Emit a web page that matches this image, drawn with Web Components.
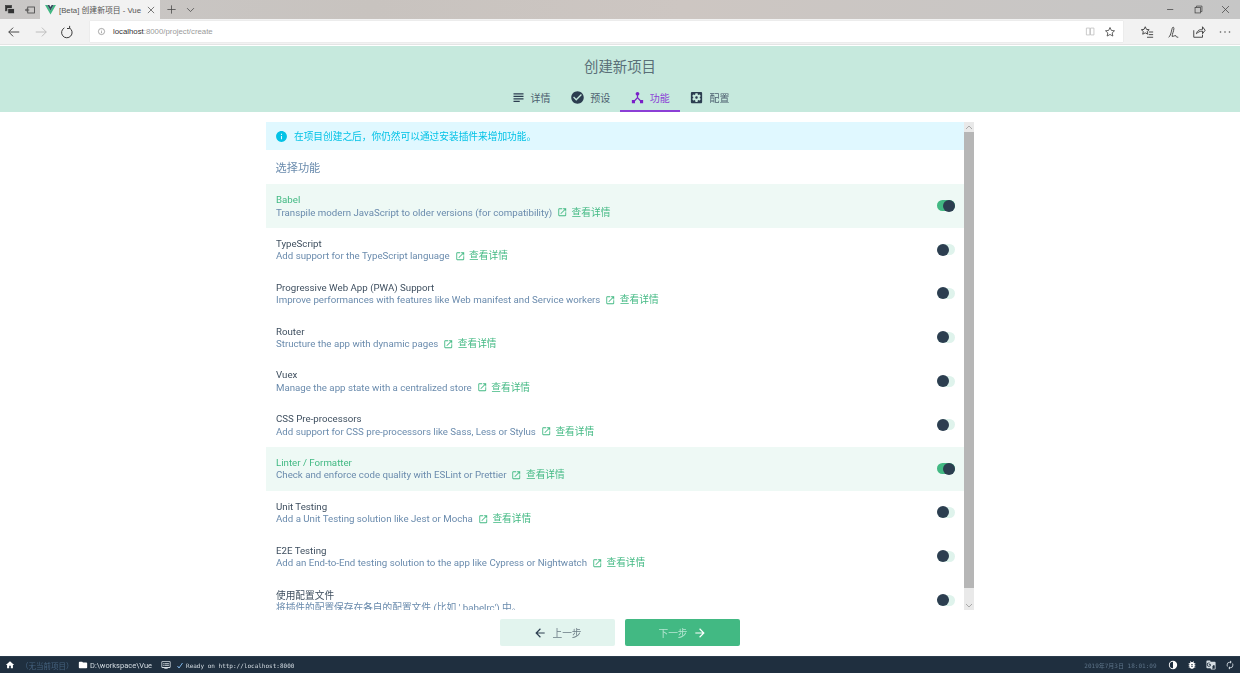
<!DOCTYPE html>
<html lang="zh-CN"><head><meta charset="utf-8"><title>[Beta] 创建新项目 - Vue</title>
<style>
html,body{margin:0;height:673px;overflow:hidden;background:#fff}
body{font:9.7px Roboto,"Noto Sans CJK SC",sans-serif;color:#2c3e50}
app-page{display:flex;flex-direction:column;width:1240px;height:673px;filter:blur(.3px)}
</style></head><body>
<app-page>
  <browser-chrome></browser-chrome>
  <project-header title-text="创建新项目"></project-header>
  <main-panel></main-panel>
  <wizard-actions></wizard-actions>
  <status-bar></status-bar>
</app-page>
<script>
const P={
 subject:'M14 17H4v2h10v-2zm6-8H4v2h16V9zM4 15h16v-2H4v2zM4 5v2h16V5H4z',
 check:'M12 2C6.48 2 2 6.48 2 12s4.48 10 10 10 10-4.48 10-10S17.52 2 12 2zm-2 15l-5-5 1.41-1.41L10 14.17l7.59-7.59L19 8l-9 9z',
 hub:'M17 16l-4-4V8.82C14.16 8.4 15 7.3 15 6c0-1.66-1.34-3-3-3S9 4.34 9 6c0 1.3.84 2.4 2 2.82V12l-4 4H3v5h5v-3.05l4-4.2 4 4.2V21h5v-5h-4z',
 settings:'M12 10c-1.1 0-2 .9-2 2s.9 2 2 2 2-.9 2-2-.9-2-2-2zm7-7H5c-1.11 0-2 .9-2 2v14c0 1.1.89 2 2 2h14c1.11 0 2-.9 2-2V5c0-1.1-.89-2-2-2zm-1.75 9c0 .23-.02.46-.05.68l1.48 1.16c.13.11.17.3.08.45l-1.4 2.42c-.09.15-.27.21-.43.15l-1.74-.7c-.36.28-.76.51-1.18.69l-.26 1.85c-.03.17-.18.3-.35.3h-2.8c-.17 0-.32-.13-.35-.29l-.26-1.85c-.43-.18-.82-.41-1.18-.69l-1.74.7c-.16.06-.34 0-.43-.15l-1.4-2.42c-.09-.15-.05-.34.08-.45l1.48-1.16c-.03-.23-.05-.46-.05-.69 0-.23.02-.46.05-.68l-1.48-1.16c-.13-.11-.17-.3-.08-.45l1.4-2.42c.09-.15.27-.21.43-.15l1.74.7c.36-.28.76-.51 1.18-.69l.26-1.85c.03-.17.18-.3.35-.3h2.8c.17 0 .32.13.35.29l.26 1.85c.43.18.82.41 1.18.69l1.74-.7c.16-.06.34 0 .43.15l1.4 2.42c.09.15.05.34-.08.45l-1.48 1.16c.03.23.05.46.05.69z',
 open:'M19 19H5V5h7V3H5c-1.11 0-2 .9-2 2v14c0 1.1.89 2 2 2h14c1.1 0 2-.9 2-2v-7h-2v7zM14 3v2h3.59l-9.83 9.83 1.41 1.41L19 6.41V10h2V3h-7z',
 back:'M20 11H7.83l5.59-5.59L12 4l-8 8 8 8 1.41-1.41L7.83 13H20v-2z',
 fwd:'M12 4l-1.41 1.41L16.17 11H4v2h12.17l-5.58 5.59L12 20l8-8z',
 info:'M12 2C6.48 2 2 6.48 2 12s4.48 10 10 10 10-4.48 10-10S17.52 2 12 2zm1 15h-2v-6h2v6zm0-8h-2V7h2v2z',
 home:'M10 20v-6h4v6h5v-8h3L12 3 2 12h3v8z',
 folder:'M10 4H4c-1.1 0-1.99.9-1.99 2L2 18c0 1.1.9 2 2 2h16c1.1 0 2-.9 2-2V8c0-1.1-.9-2-2-2h-8l-2-2z',
 dvr:'M21 3H3c-1.1 0-2 .9-2 2v12c0 1.1.9 2 2 2h5v2h8v-2h5c1.1 0 1.99-.9 1.99-2L23 5c0-1.1-.9-2-2-2zm0 14H3V5h18v12zm-2-9H8v2h11V8zm0 4H8v2h11v-2zM7 8H5v2h2V8zm0 4H5v2h2v-2z',
 half:'M12 2a10 10 0 1 0 0 20 10 10 0 0 0 0-20zm0 2.2v15.6a7.8 7.8 0 0 1 0-15.6z',
 bug:'M20 8h-2.81c-.45-.78-1.07-1.45-1.82-1.96L17 4.41 15.59 3l-2.17 2.17C12.96 5.06 12.49 5 12 5c-.49 0-.96.06-1.41.17L8.41 3 7 4.41l1.62 1.63C7.88 6.55 7.26 7.22 6.81 8H4v2h2.09c-.05.33-.09.66-.09 1v1H4v2h2v1c0 .34.04.67.09 1H4v2h2.81c1.04 1.79 2.97 3 5.19 3s4.15-1.21 5.19-3H20v-2h-2.09c.05-.33.09-.66.09-1v-1h2v-2h-2v-1c0-.34-.04-.67-.09-1H20V8zm-6 8h-4v-2h4v2zm0-4h-4v-2h4v2z',
 trans:'M21 4H11l-1-3H3c-1.1 0-2 .9-2 2v15c0 1.1.9 2 2 2h8l1 3h9c1.1 0 2-.9 2-2V6c0-1.1-.9-2-2-2zM7 16c-2.76 0-5-2.24-5-5s2.24-5 5-5c1.35 0 2.48.5 3.35 1.3L9 8.6c-.38-.36-1.04-.78-2-.78-1.71 0-3.1 1.41-3.1 3.18S5.29 14.18 7 14.18c1.98 0 2.72-1.42 2.84-2.18H7v-1.71h4.73c.04.26.08.52.08.85C11.81 14 9.9 16 7 16zm14 5h-7l2-2-1-3 3-4 3 1v8z',
 refresh:'M12 6v3l4-4-4-4v3c-4.42 0-8 3.58-8 8 0 1.57.46 3.03 1.24 4.26L6.7 14.8c-.45-.83-.7-1.79-.7-2.8 0-3.31 2.69-6 6-6zm6.76 1.74L17.3 9.2c.44.84.7 1.79.7 2.8 0 3.31-2.69 6-6 6v-3l-4 4 4 4v-3c4.42 0 8-3.58 8-8 0-1.57-.46-3.03-1.24-4.26z'
};
const ic=(n,s,c,x='')=>`<svg width="${s}" height="${s}" viewBox="0 0 24 24" style="fill:${c};flex:none;display:block;${x}"><path d="${P[n]}"/></svg>`;
function def(name,render){customElements.define(name,class extends HTMLElement{connectedCallback(){if(!this.shadowRoot)this.attachShadow({mode:'open'});this.shadowRoot.innerHTML=render(this)}})}
const st=(n,s=14)=>`<svg width="${s}" height="${s}" viewBox="0 0 16 16" fill="none" stroke="#444" stroke-width="1.1" style="display:block;flex:none">${n}</svg>`;

def('browser-chrome',()=>`<style>
:host{display:block;flex:none;height:46px;font-family:"Liberation Sans","Noto Sans CJK SC",sans-serif}
.strip{height:19px;display:flex;align-items:center;background:linear-gradient(90deg,#c9c7c6,#c8c3bf 30%,#cdc6c2 55%,#c6c6c6)}
.l{width:40px;display:flex;gap:8px;padding-left:4px;box-sizing:border-box}
.tab{width:120px;height:19px;background:#f2f2f2;display:flex;align-items:center;padding:0 4px 0 5px;box-sizing:border-box;font-size:7.800px;color:#555;white-space:nowrap}
.tab span{margin-left:3px;flex:1;overflow:hidden}
.after{display:flex;gap:8px;margin-left:6px;align-items:center}
.sp{flex:1}.win{display:flex;gap:16.500px;padding-right:9px;align-items:center}
.bar{height:26px;background:#f2f2f2;display:flex;align-items:center;border-bottom:1px solid #e4e4e4;box-sizing:border-box}
.nav{width:90px;display:flex;gap:12.500px;padding-left:7px;box-sizing:border-box}
.url{width:1033px;height:21px;background:#fff;box-shadow:0 0 1px #ccc;display:flex;align-items:center;padding:0 7px;box-sizing:border-box;font-size:7.800px;color:#9a9a9a}
.url b{font-weight:400;color:#333;margin-left:7px}
.end{margin-left:auto;display:flex;align-items:center;gap:8.500px}
.right{display:flex;gap:12px;padding-left:17px}
</style>
<div class="strip">
 <div class="l">${st('<rect x="2" y="2" width="8" height="7" fill="#333"/><rect x="5" y="6" width="9" height="7" fill="#333" stroke="#ccc"/>',12)}${st('<rect x="5" y="4" width="9" height="8"/><path d="M2 8h5M4 6l-2 2 2 2"/>',12)}</div>
 <div class="tab"><svg width="11" height="10" viewBox="0 0 24 22" style="display:block;flex:none"><path d="M0 0h5l7 12L19 0h5L12 21z" fill="#41b883"/><path d="M5 0h4.500l2.500 4.500L14.500 0H19l-7 12z" fill="#34495e"/></svg><span>[Beta] 创建新项目 - Vue</span>${st('<path d="M3 3l10 10M13 3L3 13"/>',10)}</div>
 <div class="after">${st('<path d="M8 2v12M2 8h12"/>',11)}${st('<path d="M3 6l5 5 5-5"/>',11)}</div>
 <div class="sp"></div>
 <div class="win">${st('<path d="M3 8h9"/>',11)}${st('<rect x="3" y="5" width="8" height="8"/><path d="M5 5V3h8v8h-2"/>',11)}${st('<path d="M3 3l10 10M13 3L3 13"/>',11)}</div>
</div>
<div class="bar">
 <div class="nav">${st('<path d="M14 8H2M7 3L2 8l5 5"/>')}${st('<path d="M2 8h12M9 3l5 5-5 5" stroke="#bbb"/>')}${st('<path d="M11 3.500A6 6 0 1 1 5 3.300M11 1v3h-3" stroke="#333" />')}</div>
 <div class="url">${st('<circle cx="8" cy="8" r="5.500" stroke="#777"/><path d="M8 7.500v3.500M8 5v1" stroke="#777"/>',9)}<b>localhost</b>:8000/project/create
  <div class="end">${st('<path d="M2 3h5v10H2zM8 3h5v10H8z" stroke="#bbb"/>',11)}${st('<path d="M8 2l1.800 3.900 4.200.500-3.100 2.800.900 4.200L8 11.300l-3.800 2.100.9-4.200L2 6.400l4.200-.500z"/>',12)}</div>
 </div>
 <div class="right">${st('<path d="M6 2l1.400 3 3.100.400-2.300 2 .700 3.100L6 9l-2.900 1.500.7-3.100-2.300-2 3.100-.400zM10 8h5M10 11h5M8 14h7"/>')}${st('<path d="M3 14c2-1 3-6 4-10 .5-2 2-2 2 0 0 3-2 6-2 9 2 0 3-1 4-1 0 1 1 2 3 2"/>')}${st('<path d="M2 6v8h10v-3M5 10c1-4 4-5 7-5V2l3 4-3 4V7c-3 0-5 1-7 3z"/>')}<svg width="12" height="14" viewBox="0 0 12 14" style="display:block;margin-left:1px"><g fill="#555"><circle cx="1.500" cy="7" r=".8"/><circle cx="6" cy="7" r=".8"/><circle cx="10.500" cy="7" r=".8"/></g></svg></div>
</div>`);

def('nav-tab',h=>{const a=h.hasAttribute('active');return `<style>
:host{display:flex;width:59.600px;height:24px;box-sizing:border-box;align-items:center;justify-content:center;gap:5px;padding-bottom:3px;font-size:10px;border-bottom:2px solid ${a?'#8c3fd6':'transparent'};color:${a?'#8c3fd6':'#4c5f6f'}}
</style>${ic(h.getAttribute('icon'),15,a?'#7a1fc8':'#2c3e50')}<slot></slot>`});

def('project-header',h=>`<style>
:host{display:block;flex:none;height:66px;background:#c6e9dd;box-sizing:border-box;text-align:center}
h1{margin:0;height:42px;padding-top:12px;box-sizing:border-box;font:400 14.400px/20px Roboto,"Noto Sans CJK SC",sans-serif;color:#5a6f78}
.tabs{display:flex;justify-content:center}
</style><h1>${h.getAttribute('title-text')}</h1><div class="tabs"><nav-tab icon="subject">详情</nav-tab><nav-tab icon="check">预设</nav-tab><nav-tab icon="hub" active>功能</nav-tab><nav-tab icon="settings">配置</nav-tab></div>`);

def('ui-toggle',h=>{const on=h.hasAttribute('on');return `<style>
:host{display:block;position:relative;width:18px;height:11px;border-radius:6px;background:${on?'#42b983':'#dff3ec'};flex:none}
i{position:absolute;top:-.5px;${on?'right:-.5px':'left:0'};width:12px;height:12px;border-radius:50%;background:#2c3e50}
</style><i></i>`});

def('feature-row',h=>{const on=h.hasAttribute('on');const cjk=h.hasAttribute('nolink');const link=cjk?'':`<span class="lk">${ic('open',10.500,'#42b983','margin:-1px 4px 0 5px')}查看详情</span>`;return `<style>
:host{display:flex;align-items:center;height:43.800px;padding:0 9.500px 0 10px;box-sizing:border-box;background:${on?'#eef9f5':'transparent'};flex:none}
.t{flex:1;min-width:0;line-height:12.500px;white-space:nowrap;padding-top:${cjk?4:1.5}px}
.n{color:${on?'#42b983':'#2c3e50'};opacity:${on?1:.92}}
.d{color:#6a8bad;display:flex;align-items:center}
.lk{display:inline-flex;align-items:center;color:#42b983}
</style><div class="t"><div class="n">${h.getAttribute('name')}</div><div class="d"><span>${h.getAttribute('desc')}</span>${link}</div></div><ui-toggle ${on?'on':''}></ui-toggle>`});

def('fake-scrollbar',()=>`<style>
:host{display:flex;flex-direction:column;width:10px;height:100%;background:#e9e9e9;flex:none}
.a{height:10px;display:flex;align-items:center;justify-content:center;flex:none}
.th{height:456px;background:#b6b6b6;flex:none}.s{flex:1}
</style><div class="a"><svg width="8" height="5" viewBox="0 0 8 5"><path d="M1 4l3-3 3 3" fill="none" stroke="#aaa"/></svg></div><div class="th"></div><div class="s"></div><div class="a"><svg width="8" height="5" viewBox="0 0 8 5"><path d="M1 1l3 3 3-3" fill="none" stroke="#aaa"/></svg></div>`);

def('main-panel',()=>`<style>
:host{display:flex;justify-content:center;flex:none;height:498px;padding-top:10px;box-sizing:border-box}
.wrap{display:flex;width:708px;height:488px}
.list{flex:1;min-width:0;overflow:hidden;display:flex;flex-direction:column}
.info{flex:none;height:28px;background:#e0f8ff;color:#03c2e6;display:flex;align-items:center;padding-left:8.500px;gap:6.500px;font-size:9.700px}
h2{flex:none;margin:0;height:34px;padding-left:9.500px;font:400 11.200px/38px Roboto,"Noto Sans CJK SC",sans-serif;color:#6a8bad}
</style><div class="wrap"><div class="list">
<div class="info">${ic('info',13,'#03c2e6')}<span>在项目创建之后，你仍然可以通过安装插件来增加功能。</span></div>
<h2>选择功能</h2>
<feature-row on name="Babel" desc="Transpile modern JavaScript to older versions (for compatibility)"></feature-row>
<feature-row name="TypeScript" desc="Add support for the TypeScript language"></feature-row>
<feature-row name="Progressive Web App (PWA) Support" desc="Improve performances with features like Web manifest and Service workers"></feature-row>
<feature-row name="Router" desc="Structure the app with dynamic pages"></feature-row>
<feature-row name="Vuex" desc="Manage the app state with a centralized store"></feature-row>
<feature-row name="CSS Pre-processors" desc="Add support for CSS pre-processors like Sass, Less or Stylus"></feature-row>
<feature-row on name="Linter / Formatter" desc="Check and enforce code quality with ESLint or Prettier"></feature-row>
<feature-row name="Unit Testing" desc="Add a Unit Testing solution like Jest or Mocha"></feature-row>
<feature-row name="E2E Testing" desc="Add an End-to-End testing solution to the app like Cypress or Nightwatch"></feature-row>
<feature-row nolink name="使用配置文件" desc="将插件的配置保存在各自的配置文件 (比如 '.babelrc') 中。"></feature-row>
</div><fake-scrollbar></fake-scrollbar></div>`);

def('wizard-actions',()=>`<style>
:host{display:flex;justify-content:center;gap:10px;flex:none;height:46px;padding-top:9px;box-sizing:border-box}
.b{width:115px;height:27px;border-radius:2px;display:flex;align-items:center;justify-content:center;gap:5px;font-size:9.700px}
.p{background:#e2f4ee;color:#6d7d86}.n{background:#42b983;color:#b6e6d2}
</style><div class="b p">${ic('back',14,'#2c3e50')}上一步</div><div class="b n">下一步${ic('fwd',14,'#fff')}</div>`);

def('status-bar',()=>`<style>
:host{display:flex;align-items:center;flex:none;height:17px;background:#1f2f3f;border-top:1px solid #2a3b4b;box-sizing:border-box;color:#d5dde3;font-size:7.500px;white-space:nowrap}
.m{font-family:"DejaVu Sans Mono","Noto Sans CJK SC",monospace;font-size:6px}
.g{display:flex;align-items:center}.r{margin-left:auto;display:flex;align-items:center}
</style>
<div class="g" style="padding-left:5px;width:73px">${ic('home',10,'#fff')}<span style="color:#45627e;margin-left:6px;font-size:7.500px">（无当前项目）</span></div>
<div class="g">${ic('folder',10,'#fff')}<span style="margin-left:2px">D:\\workspace\\Vue</span></div>
<div class="g" style="margin-left:9px">${ic('dvr',10,'#d5dde3')}<svg width="6" height="7" viewBox="0 0 6 7" style="margin:0 3px 0 6px"><path d="M.5 4l1.500 2L5.500 1" fill="none" stroke="#7fb6e8"/></svg><span class="m">Ready on http://localhost:8000</span></div>
<div class="r"><span class="m" style="color:#5d7388;margin-right:1px">2019年7月3日 18:01:09</span>
<span style="width:10px"></span>${ic('half',10,'#fff')}<span style="width:9px"></span>${ic('bug',10,'#fff')}<span style="width:9.500px"></span>${ic('trans',10,'#d5dde3')}<span style="width:9px"></span>${ic('refresh',10,'#d5dde3')}<span style="width:5px"></span></div>`);

def('app-page',()=>`<style>:host{display:flex;flex-direction:column}</style><slot></slot>`);
</script>
</body></html>
